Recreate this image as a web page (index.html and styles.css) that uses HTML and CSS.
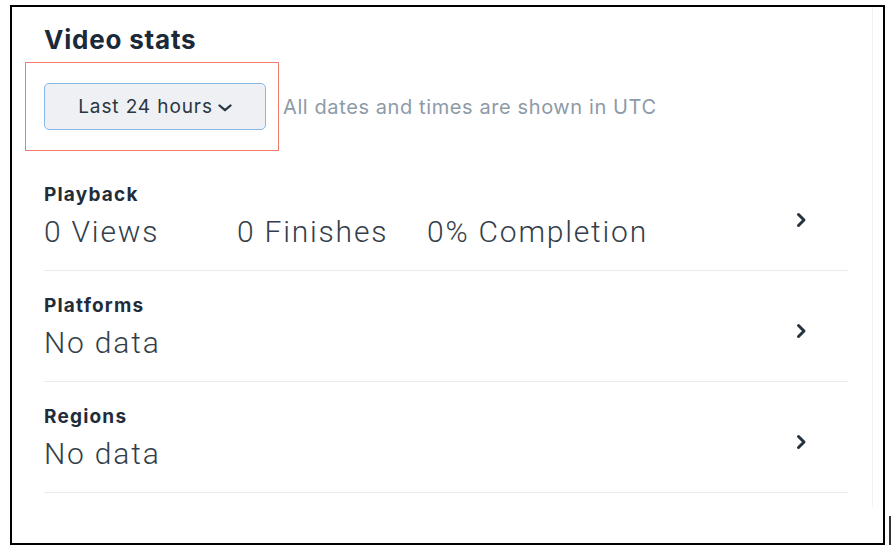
FILE: index.html
```html
<!DOCTYPE html>
<html>
<head>
<meta charset="utf-8">
<link rel="stylesheet" href="styles.css">
</head>
<body>
<div class="frame">
  <div class="panel">
    <h1 class="title">Video stats</h1>
    <div class="range-row">
      <div class="highlight">
        <button class="range-btn">Last 24 hours<svg class="caret" width="14" height="8" viewBox="0 0 14 8"><path d="M1.5 1.5 L7 6.2 L12.5 1.5" fill="none" stroke="#2b3540" stroke-width="2.3" stroke-linecap="round" stroke-linejoin="round"/></svg></button>
      </div>
      <span class="tz-note">All dates and times are shown in UTC</span>
    </div>
    <div class="section first">
      <div class="section-body">
        <div class="label">Playback</div>
        <div class="values">
          <span class="val v1">0 Views</span>
          <span class="val v2">0 Finishes</span>
          <span class="val">0% Completion</span>
        </div>
      </div>
      <svg class="chev" width="11" height="16" viewBox="0 0 11 16"><path d="M2.5 2.5 L8 8 L2.5 13.5" fill="none" stroke="#25323f" stroke-width="3" stroke-linecap="round" stroke-linejoin="round"/></svg>
    </div>
    <div class="section">
      <div class="section-body">
        <div class="label">Platforms</div>
        <div class="values"><span class="val">No data</span></div>
      </div>
      <svg class="chev" width="11" height="16" viewBox="0 0 11 16"><path d="M2.5 2.5 L8 8 L2.5 13.5" fill="none" stroke="#25323f" stroke-width="3" stroke-linecap="round" stroke-linejoin="round"/></svg>
    </div>
    <div class="section">
      <div class="section-body">
        <div class="label">Regions</div>
        <div class="values"><span class="val">No data</span></div>
      </div>
      <svg class="chev" width="11" height="16" viewBox="0 0 11 16"><path d="M2.5 2.5 L8 8 L2.5 13.5" fill="none" stroke="#25323f" stroke-width="3" stroke-linecap="round" stroke-linejoin="round"/></svg>
    </div>
  </div>
</div>
<div class="edge-mark"></div>
</body>
</html>
```
FILE: styles.css
```css
html, body {
  margin: 0;
  padding: 0;
  background: #ffffff;
}
body {
  position: relative;
  width: 892px;
  height: 550px;
  font-family: Inter, "Liberation Sans", Arial, sans-serif;
  color: #1c2938;
}
.frame {
  position: absolute;
  left: 10px;
  top: 5px;
  width: 871px;
  height: 536px;
  border: 2px solid #000;
  background: #fff;
}
.panel {
  width: 828px;
  height: 500px;
  padding-left: 32px;
  border-right: 1px solid #eef0f2;
  box-sizing: content-box;
}
.title {
  margin: 0;
  padding-top: 18px;
  font-size: 26px;
  line-height: 30px;
  font-weight: 700;
  color: #1c2938;
  letter-spacing: 0.8px;
}
.range-row {
  display: flex;
  align-items: center;
  margin-left: -19px;
  margin-top: 7px;
}
.highlight {
  border: 1px solid #ef7b6c;
  padding: 20px 12px 20px 18px;
}
.range-btn {
  display: flex;
  align-items: center;
  justify-content: center;
  gap: 5px;
  width: 222px;
  height: 47px;
  border: 1px solid #86b8e8;
  border-radius: 5px;
  background: #eef0f3;
  font-family: Inter, "Liberation Sans", Arial, sans-serif;
  font-size: 19px;
  color: #2b3540;
  letter-spacing: 0.9px;
  padding: 0;
}
.caret {
  margin-top: 2px;
}
.tz-note {
  margin-left: 4px;
  font-size: 20px;
  color: #8d9aa7;
  letter-spacing: 0.6px;
}
.section {
  display: flex;
  align-items: center;
  width: 804px;
  border-bottom: 1px solid #e8ebee;
  padding: 25px 0 21px;
}
.section.first {
  padding-top: 34px;
}
.section-body {
  flex: 1;
}
.label {
  font-size: 19px;
  line-height: 20px;
  font-weight: 700;
  color: #1f2d3b;
  letter-spacing: 1.2px;
}
.values {
  display: flex;
  margin-top: 10px;
}
.val {
  font-family: Roboto, Inter, "Liberation Sans", sans-serif;
  font-size: 30px;
  line-height: 34px;
  font-weight: 300;
  color: #333e4a;
  letter-spacing: 1.8px;
}
.v1 {
  width: 193px;
}
.v2 {
  width: 190px;
}
.chev {
  margin-right: 41px;
  margin-top: 6px;
}
.edge-mark {
  position: absolute;
  left: 889px;
  top: 516px;
  width: 2px;
  height: 29px;
  background: #333;
}
```
